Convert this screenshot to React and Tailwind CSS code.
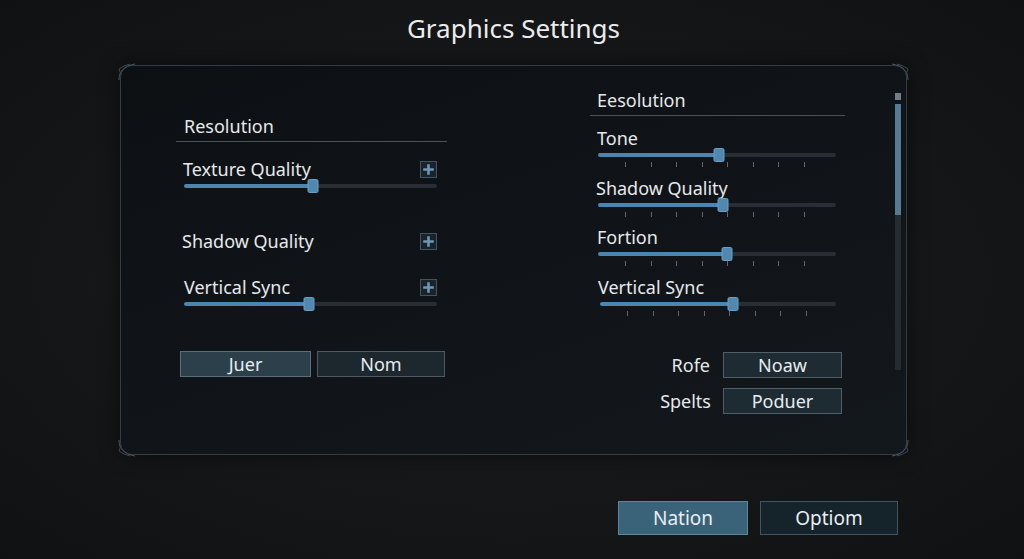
import React from "react";

const FONT = { fontFamily: '"Noto Sans", "Open Sans", sans-serif' };

function PlusBox() {
  return (
    <svg width="17" height="17" viewBox="0 0 17 17" className="shrink-0">
      <rect x="0.5" y="0.5" width="16" height="16" fill="#19232b" stroke="#44535e" />
      <path d="M8.5 4.5v8M4.5 8.5h8" stroke="#6f97b5" strokeWidth="2.6" strokeLinecap="square" />
    </svg>
  );
}

function Slider({ pct, thumbW = 11, thumbH = 14 }) {
  return (
    <div className="relative h-[14px] flex items-center">
      <div className="flex w-full h-[4px] rounded-full overflow-hidden">
        <div className="h-full bg-[#4a86b0]" style={{ width: pct + "%" }} />
        <div className="h-full flex-1 bg-[#282e33]" />
      </div>
      <div
        className="absolute top-1/2 -translate-y-1/2 -translate-x-1/2 rounded-[2px] bg-[#5088b0] border border-[#6c9fc4]"
        style={{ left: pct + "%", width: thumbW, height: thumbH }}
      />
    </div>
  );
}

function Ticks() {
  return (
    <div className="ml-[27px] w-[180px] flex justify-between h-[5px]">
      {[0, 1, 2, 3, 4, 5, 6, 7].map((i) => (
        <div key={i} className="w-px h-full bg-[#5f686f]" />
      ))}
    </div>
  );
}

function Corner({ className }) {
  return (
    <svg width="18" height="18" viewBox="0 0 18 18" className={"absolute " + className}>
      <path d="M1 17 C1 8 6 3 17 1" stroke="#4a5761" strokeWidth="1" fill="none" />
      <path d="M3 12 L1 6 L6 3 L12 1" stroke="#3a4650" strokeWidth="1" fill="none" />
    </svg>
  );
}

export default function App() {
  return (
    <div
      className="w-[1024px] h-[559px] overflow-hidden flex flex-col text-[#e6e9eb] bg-[radial-gradient(ellipse_at_center,#1d1e20_0%,#151617_60%,#101112_100%)]"
      style={FONT}
    >
      <h1 className="pt-[11px] text-center text-[26px] leading-[34px] text-[#ececec] pl-[3px]">
        Graphics Settings
      </h1>

      <div className="relative ml-[120px] mt-[20px] w-[787px] h-[390px] rounded-[12px] border border-[#313c45] bg-[linear-gradient(160deg,#0d1013_0%,#101418_50%,#13181d_100%)] flex shadow-[0_0_20px_rgba(0,0,0,0.5)]">
        <Corner className="-left-[3px] -top-[3px]" />
        <Corner className="-right-[3px] -top-[3px] -scale-x-100" />
        <Corner className="-left-[3px] -bottom-[3px] -scale-y-100" />
        <Corner className="-right-[3px] -bottom-[3px] -scale-100" />

        {/* Left column */}
        <div className="ml-[55px] pt-[48px] w-[271px] flex flex-col">
          <div className="pl-[8px] text-[18px] leading-[24px] pb-[3px] border-b border-[#48535c]">
            Resolution
          </div>

          <div className="mt-[15px] flex items-center justify-between pl-[7px] pr-[10px] h-[24px]">
            <span className="text-[18px] leading-[24px]">Texture Quality</span>
            <PlusBox />
          </div>
          <div className="mt-[-2px] ml-[8px] mr-[10px]">
            <Slider pct={51} />
          </div>

          <div className="mt-[36px] flex items-center justify-between pl-[6px] pr-[10px] h-[24px]">
            <span className="text-[18px] leading-[24px]">Shadow Quality</span>
            <PlusBox />
          </div>

          <div className="mt-[22px] flex items-center justify-between pl-[8px] pr-[10px] h-[24px]">
            <span className="text-[18px] leading-[24px]">Vertical Sync</span>
            <PlusBox />
          </div>
          <div className="mt-[-2px] ml-[8px] mr-[10px]">
            <Slider pct={49.5} />
          </div>

          <div className="mt-[40px] ml-[4px] flex gap-[6px]">
            <button className="w-[131px] h-[26px] bg-[#2c404c] border border-[#5b6f7b] text-[18px] leading-none text-[#e8ecef]">
              Juer
            </button>
            <button className="w-[128px] h-[26px] bg-[#1c272e] border border-[#4d5a63] text-[18px] leading-none text-[#e8ecef]">
              Nom
            </button>
          </div>
        </div>

        {/* Right column */}
        <div className="ml-[143px] pt-[22px] w-[255px] flex flex-col">
          <div className="pl-[7px] text-[18px] leading-[24px] pb-[3px] border-b border-[#48535c]">
            Eesolution
          </div>

          <div className="mt-[10px] pl-[7px] text-[18px] leading-[24px]">Tone</div>
          <div className="mt-[-2px] ml-[8px] mr-[9px]">
            <Slider pct={51} thumbW={11} thumbH={14} />
          </div>
          <div className="ml-[8px]"><Ticks /></div>

          <div className="mt-[9px] pl-[6px] text-[18px] leading-[24px]">Shadow Quality</div>
          <div className="mt-[-2px] ml-[8px] mr-[9px]">
            <Slider pct={52.5} />
          </div>
          <div className="ml-[8px]"><Ticks /></div>

          <div className="mt-[8px] pl-[7px] text-[18px] leading-[24px]">Fortion</div>
          <div className="mt-[-2px] ml-[8px] mr-[9px]">
            <Slider pct={54} />
          </div>
          <div className="ml-[8px]"><Ticks /></div>

          <div className="mt-[9px] pl-[8px] text-[18px] leading-[24px]">Vertical Sync</div>
          <div className="mt-[-2px] ml-[10px] mr-[9px]">
            <Slider pct={56.5} />
          </div>
          <div className="ml-[10px]"><Ticks /></div>

          <div className="mt-[36px] pr-[3px] flex items-center justify-end gap-[13px]">
            <span className="text-[18px] leading-[24px]">Rofe</span>
            <button className="w-[119px] h-[26px] bg-[#1e2b33] border border-[#4f5e68] text-[18px] leading-none text-[#e8ecef]">
              Noaw
            </button>
          </div>
          <div className="mt-[10px] pr-[3px] flex items-center justify-end gap-[12px]">
            <span className="text-[18px] leading-[24px]">Spelts</span>
            <button className="w-[119px] h-[26px] bg-[#1e2b33] border border-[#4f5e68] text-[18px] leading-none text-[#e8ecef]">
              Poduer
            </button>
          </div>
        </div>

        {/* Scrollbar */}
        <div className="ml-[50px] mt-[27px] w-[6px] h-[277px] flex flex-col">
          <div className="h-[7px] bg-[#6f7e88]" />
          <div className="mt-[4px] h-[111px] bg-[#557a93]" />
          <div className="flex-1 bg-[#242b31]" />
        </div>
      </div>

      <div className="ml-[618px] mt-[46px] flex gap-[12px]">
        <button className="w-[130px] h-[34px] bg-[#3a6379] border border-[#5d879c] text-[19px] leading-none text-[#e8eef2]">
          Nation
        </button>
        <button className="w-[138px] h-[34px] bg-[#15232b] border border-[#405562] text-[19px] leading-none text-[#e8eef2]">
          Optiom
        </button>
      </div>
    </div>
  );
}
